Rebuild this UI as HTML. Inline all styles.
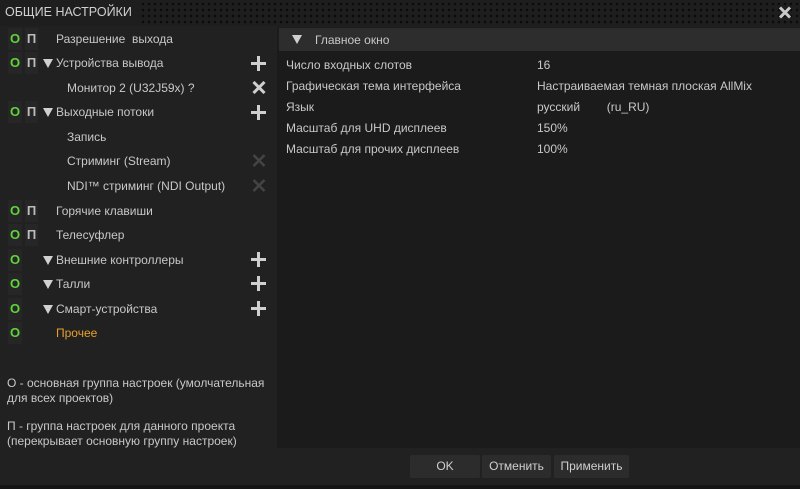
<!DOCTYPE html>
<html><head><meta charset="utf-8"><style>
*{margin:0;padding:0;box-sizing:border-box}
body{width:800px;height:489px;overflow:hidden;background:#212121;font-family:"Liberation Sans","DejaVu Sans",sans-serif;font-size:12px;color:#c8c8c8;position:relative}
.a{position:absolute;white-space:nowrap}
#title{left:0;top:0;width:800px;height:26px;background-color:#1e1e1e;background-image:radial-gradient(circle,#0c0c0c 1.2px,transparent 1.5px);background-size:6px 6px;background-position:2px 1px}
#tt{left:0;top:0;height:26px;background:#1e1e1e;padding:5px 6px 0 5px;font-size:12.5px;color:#d0d0d0}
.ob{position:absolute;left:8px;width:14px;height:22px;background:#262626;color:#5fd53a;font-weight:bold;text-align:center;line-height:22px;font-size:13px}
.pb{position:absolute;left:25px;width:13px;height:22px;background:#262626;color:#bdbdbd;font-weight:bold;text-align:center;line-height:22px;font-size:13px}
.t{position:absolute;line-height:16px;white-space:nowrap}
.tri{position:absolute;width:0;height:0;border-left:5px solid transparent;border-right:5px solid transparent;border-top:9px solid #d0d0d0}
svg{position:absolute}
.lbl{position:absolute;left:286px;white-space:nowrap}
.val{position:absolute;left:537px;white-space:nowrap}
.btn{position:absolute;top:455px;height:23px;background:#2c2c2c;border-radius:2px;text-align:center;line-height:23px;color:#cfcfcf}
</style></head><body>
<div class="a" id="title"></div>
<div class="a" id="tt">ОБЩИЕ НАСТРОЙКИ</div>
<svg style="left:778px;top:6px" width="14" height="13" viewBox="0 0 14 13"><path d="M2 1.5L12 11.5M12 1.5L2 11.5" stroke="#c8c8c8" stroke-width="3"/></svg>

<div class="a" style="left:277px;top:27px;width:523px;height:421px;background:#1b1b1b"></div>
<div class="a" style="left:279px;top:28px;width:521px;height:23px;background:#2d2d2d"></div>
<div class="tri" style="left:292px;top:35px"></div>
<div class="t" style="left:315px;top:32px">Главное окно</div>
<div class="lbl" style="top:58px">Число входных слотов</div><div class="val" style="top:58px">16</div>
<div class="lbl" style="top:79px">Графическая тема интерфейса</div><div class="val" style="top:79px">Настраиваемая темная плоская AllMix</div>
<div class="lbl" style="top:100px">Язык</div><div class="val" style="top:100px">русский&nbsp;&nbsp;&nbsp;&nbsp;&nbsp;&nbsp;&nbsp;&nbsp;(ru_RU)</div>
<div class="lbl" style="top:121px">Масштаб для UHD дисплеев</div><div class="val" style="top:121px">150%</div>
<div class="lbl" style="top:142px">Масштаб для прочих дисплеев</div><div class="val" style="top:142px">100%</div>

<div class="ob" style="top:28px">O</div><div class="pb" style="top:28px">П</div><div class="t" style="left:56px;top:31px">Разрешение&nbsp; выхода</div>
<div class="ob" style="top:52px">O</div><div class="pb" style="top:52px">П</div><div class="tri" style="left:43px;top:59px"></div><div class="t" style="left:56px;top:55px">Устройства вывода</div>
<svg style="left:251px;top:56px" width="15" height="15"><path d="M7.5 0V15M0 7.5H15" stroke="#cfcfcf" stroke-width="3"/></svg>
<div class="t" style="left:67px;top:80px">Монитор 2 (U32J59x) ?</div>
<svg style="left:252px;top:81px" width="14" height="13"><path d="M1.5 1L12.5 12M12.5 1L1.5 12" stroke="#cfcfcf" stroke-width="3"/></svg>
<div class="ob" style="top:101px">O</div><div class="pb" style="top:101px">П</div><div class="tri" style="left:43px;top:108px"></div><div class="t" style="left:56px;top:104px">Выходные потоки</div>
<svg style="left:251px;top:105px" width="15" height="15"><path d="M7.5 0V15M0 7.5H15" stroke="#cfcfcf" stroke-width="3"/></svg>
<div class="t" style="left:67px;top:129px">Запись</div>
<div class="t" style="left:67px;top:153px">Стриминг (Stream)</div>
<svg style="left:252px;top:154px" width="14" height="13"><path d="M1.5 1L12.5 12M12.5 1L1.5 12" stroke="#444" stroke-width="2.5"/></svg>
<div class="t" style="left:67px;top:178px">NDI™ стриминг (NDI Output)</div>
<svg style="left:252px;top:179px" width="14" height="13"><path d="M1.5 1L12.5 12M12.5 1L1.5 12" stroke="#444" stroke-width="2.5"/></svg>
<div class="ob" style="top:200px">O</div><div class="pb" style="top:200px">П</div><div class="t" style="left:56px;top:203px">Горячие клавиши</div>
<div class="ob" style="top:224px">O</div><div class="pb" style="top:224px">П</div><div class="t" style="left:56px;top:227px">Телесуфлер</div>
<div class="ob" style="top:249px">O</div><div class="tri" style="left:43px;top:256px"></div><div class="t" style="left:56px;top:252px">Внешние контроллеры</div>
<svg style="left:251px;top:252px" width="15" height="15"><path d="M7.5 0V15M0 7.5H15" stroke="#cfcfcf" stroke-width="3"/></svg>
<div class="ob" style="top:273px">O</div><div class="tri" style="left:43px;top:280px"></div><div class="t" style="left:56px;top:276px">Талли</div>
<svg style="left:251px;top:276px" width="15" height="15"><path d="M7.5 0V15M0 7.5H15" stroke="#cfcfcf" stroke-width="3"/></svg>
<div class="ob" style="top:298px">O</div><div class="tri" style="left:43px;top:305px"></div><div class="t" style="left:56px;top:301px">Смарт-устройства</div>
<svg style="left:251px;top:301px" width="15" height="15"><path d="M7.5 0V15M0 7.5H15" stroke="#cfcfcf" stroke-width="3"/></svg>
<div class="ob" style="top:322px">O</div><div class="t" style="left:56px;top:325px;color:#e8a02c">Прочее</div>

<div class="t" style="left:7px;top:375px">O - основная группа настроек (умолчательная</div>
<div class="t" style="left:7px;top:390px">для всех проектов)</div>
<div class="t" style="left:7px;top:418px">П - группа настроек для данного проекта</div>
<div class="t" style="left:7px;top:433px">(перекрывает основную группу настроек)</div>

<div class="btn" style="left:410px;width:70px">OK</div>
<div class="btn" style="left:482px;width:69px">Отменить</div>
<div class="btn" style="left:554px;width:75px">Применить</div>
<div class="a" style="left:0;top:485px;width:800px;height:4px;background:#151515"></div>
</body></html>
